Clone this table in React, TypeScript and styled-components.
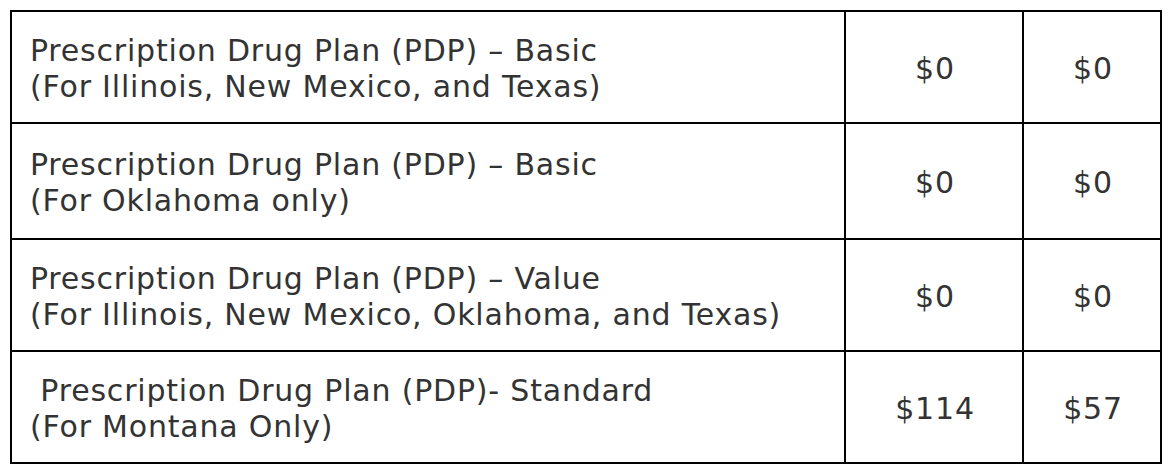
import styled, { createGlobalStyle } from 'styled-components';

const GlobalStyle = createGlobalStyle`
  html, body {
    margin: 0;
    padding: 0;
    background: #fff;
  }
`;

const plans = [
  {
    name: 'Prescription Drug Plan (PDP) – Basic',
    region: '(For Illinois, New Mexico, and Texas)',
    premium: '$0',
    reduced: '$0',
  },
  {
    name: 'Prescription Drug Plan (PDP) – Basic',
    region: '(For Oklahoma only)',
    premium: '$0',
    reduced: '$0',
  },
  {
    name: 'Prescription Drug Plan (PDP) – Value',
    region: '(For Illinois, New Mexico, Oklahoma, and Texas)',
    premium: '$0',
    reduced: '$0',
  },
  {
    name: '\u00a0Prescription Drug Plan (PDP)- Standard',
    region: '(For Montana Only)',
    premium: '$114',
    reduced: '$57',
  },
];

function App() {
  return (
    <>
      <GlobalStyle />
      <Wrap>
        <PlanTable>
          <colgroup>
            <col style={{ width: 834 }} />
            <col style={{ width: 178 }} />
            <col style={{ width: 138 }} />
          </colgroup>
          <tbody>
            {plans.map((p, i) => (
              <Row key={i} $tall={i === 1}>
                <NameCell>
                  {p.name}
                  <br />
                  {p.region}
                </NameCell>
                <PriceCell>{p.premium}</PriceCell>
                <PriceCell>{p.reduced}</PriceCell>
              </Row>
            ))}
          </tbody>
        </PlanTable>
      </Wrap>
    </>
  );
}

const Wrap = styled.div`
  padding: 10px 14px 10px 10px;
`;

const PlanTable = styled.table`
  width: 1152px;
  border-collapse: collapse;
  table-layout: fixed;
  font-family: 'DejaVu Sans', Verdana, sans-serif;
  font-size: 30px;
  letter-spacing: 0.8px;
  color: #333;
`;

const Row = styled.tr<{ $tall?: boolean }>`
  height: ${({ $tall }) => ($tall ? '116px' : '112px')};
`;

const Cell = styled.td`
  border: 2px solid #000;
  vertical-align: middle;
  line-height: 36px;
  padding-top: 4px;
  padding-bottom: 0;
`;

const NameCell = styled(Cell)`
  padding-left: 18px;
  padding-right: 18px;
  text-align: left;
`;

const PriceCell = styled(Cell)`
  padding-left: 2px;
  padding-right: 0;
  text-align: center;
`;

export default App;
